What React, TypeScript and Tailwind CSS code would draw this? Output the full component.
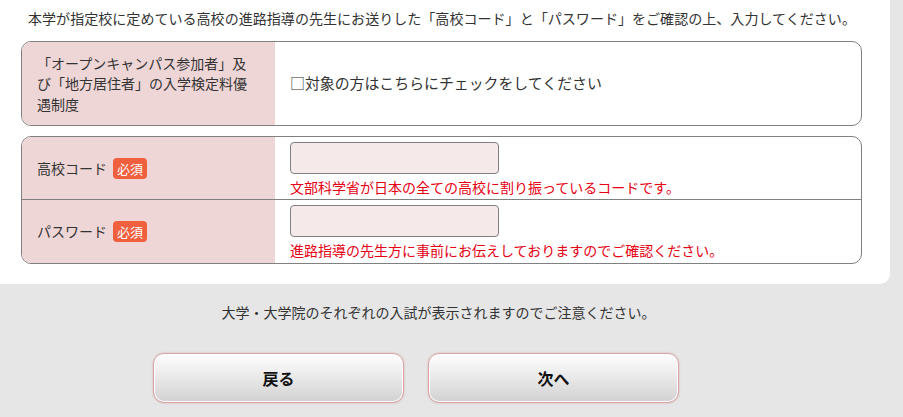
import React from "react";

// ─────────────────────────────────────────
// Pieces
// ─────────────────────────────────────────

function Required() {
  return (
    <span className="ml-[6px] inline-flex h-[21px] items-center rounded-[4px] bg-[#f0603f] px-[4px] text-[13px] leading-none text-white">
      必須
    </span>
  );
}

function LabelCell({ children }: { children: React.ReactNode }) {
  return (
    <div className="flex w-[253px] shrink-0 items-center bg-[#efd6d6] px-[15px]">
      {children}
    </div>
  );
}

function CodeRow({
  label,
  help,
  last,
}: {
  label: string;
  help: string;
  last?: boolean;
}) {
  return (
    <div className={`flex h-[63px] ${last ? "" : "border-b border-[#808080]"}`}>
      <LabelCell>
        <span className="text-[14px] text-[#333]">{label}</span>
        <Required />
      </LabelCell>
      <div className="flex flex-col pl-[15px] pt-[5px]">
        <input
          type="text"
          className="h-[32px] w-[209px] rounded-[4px] border border-[#808080] bg-[#f5e9e9] outline-none"
        />
        <p className="mt-[3px] text-[14px] leading-[20px] text-[#e50012]">{help}</p>
      </div>
    </div>
  );
}

function NavButton({ children }: { children: React.ReactNode }) {
  return (
    <button
      type="button"
      className="h-[50px] w-[251px] rounded-[11px] border border-[#d9a3a3] bg-gradient-to-b from-white to-[#d2d2d2] text-[16px] font-bold text-[#111] shadow-[inset_0_0_0_1px_#ffffff,0_0_2px_rgba(200,120,120,0.5)]"
    >
      {children}
    </button>
  );
}

// ─────────────────────────────────────────
// Page
// ─────────────────────────────────────────

export default function App() {
  return (
    <div
      className="h-[417px] w-[903px] overflow-hidden bg-[#e6e6e6] text-[#333]"
      style={{ fontFamily: '"Noto Sans CJK JP", "Noto Sans", sans-serif' }}
    >
      <div className="w-[890px] rounded-br-[10px] bg-white pb-[20px] pl-[21px] pr-[28px]">
        <p className="pl-[7px] pt-[8px] text-[14.05px] leading-[20px]">
          本学が指定校に定めている高校の進路指導の先生にお送りした「高校コード」と「パスワード」をご確認の上、入力してください。
        </p>

        <div className="mt-[13px] flex h-[85px] overflow-hidden rounded-[10px] border border-[#808080]">
          <LabelCell>
            <p className="text-[14px] leading-[20.5px] text-[#333]">
              「オープンキャンパス参加者」及び「地方居住者」の入学検定料優遇制度
            </p>
          </LabelCell>
          <div className="flex items-center pl-[15px] text-[14.9px] text-[#333]">
            □対象の方はこちらにチェックをしてください
          </div>
        </div>

        <div className="mt-[10px] overflow-hidden rounded-[10px] border border-[#808080]">
          <CodeRow label="高校コード" help="文部科学省が日本の全ての高校に割り振っているコードです。" />
          <CodeRow
            label="パスワード"
            help="進路指導の先生方に事前にお伝えしておりますのでご確認ください。"
            last
          />
        </div>
      </div>

      <p className="mt-[18px] pr-[26px] text-center text-[14px] leading-[20px] text-[#333]">
        大学・大学院のそれぞれの入試が表示されますのでご注意ください。
      </p>

      <div className="mt-[31px] flex gap-[24px] pl-[153px]">
        <NavButton>戻る</NavButton>
        <NavButton>次へ</NavButton>
      </div>
    </div>
  );
}
